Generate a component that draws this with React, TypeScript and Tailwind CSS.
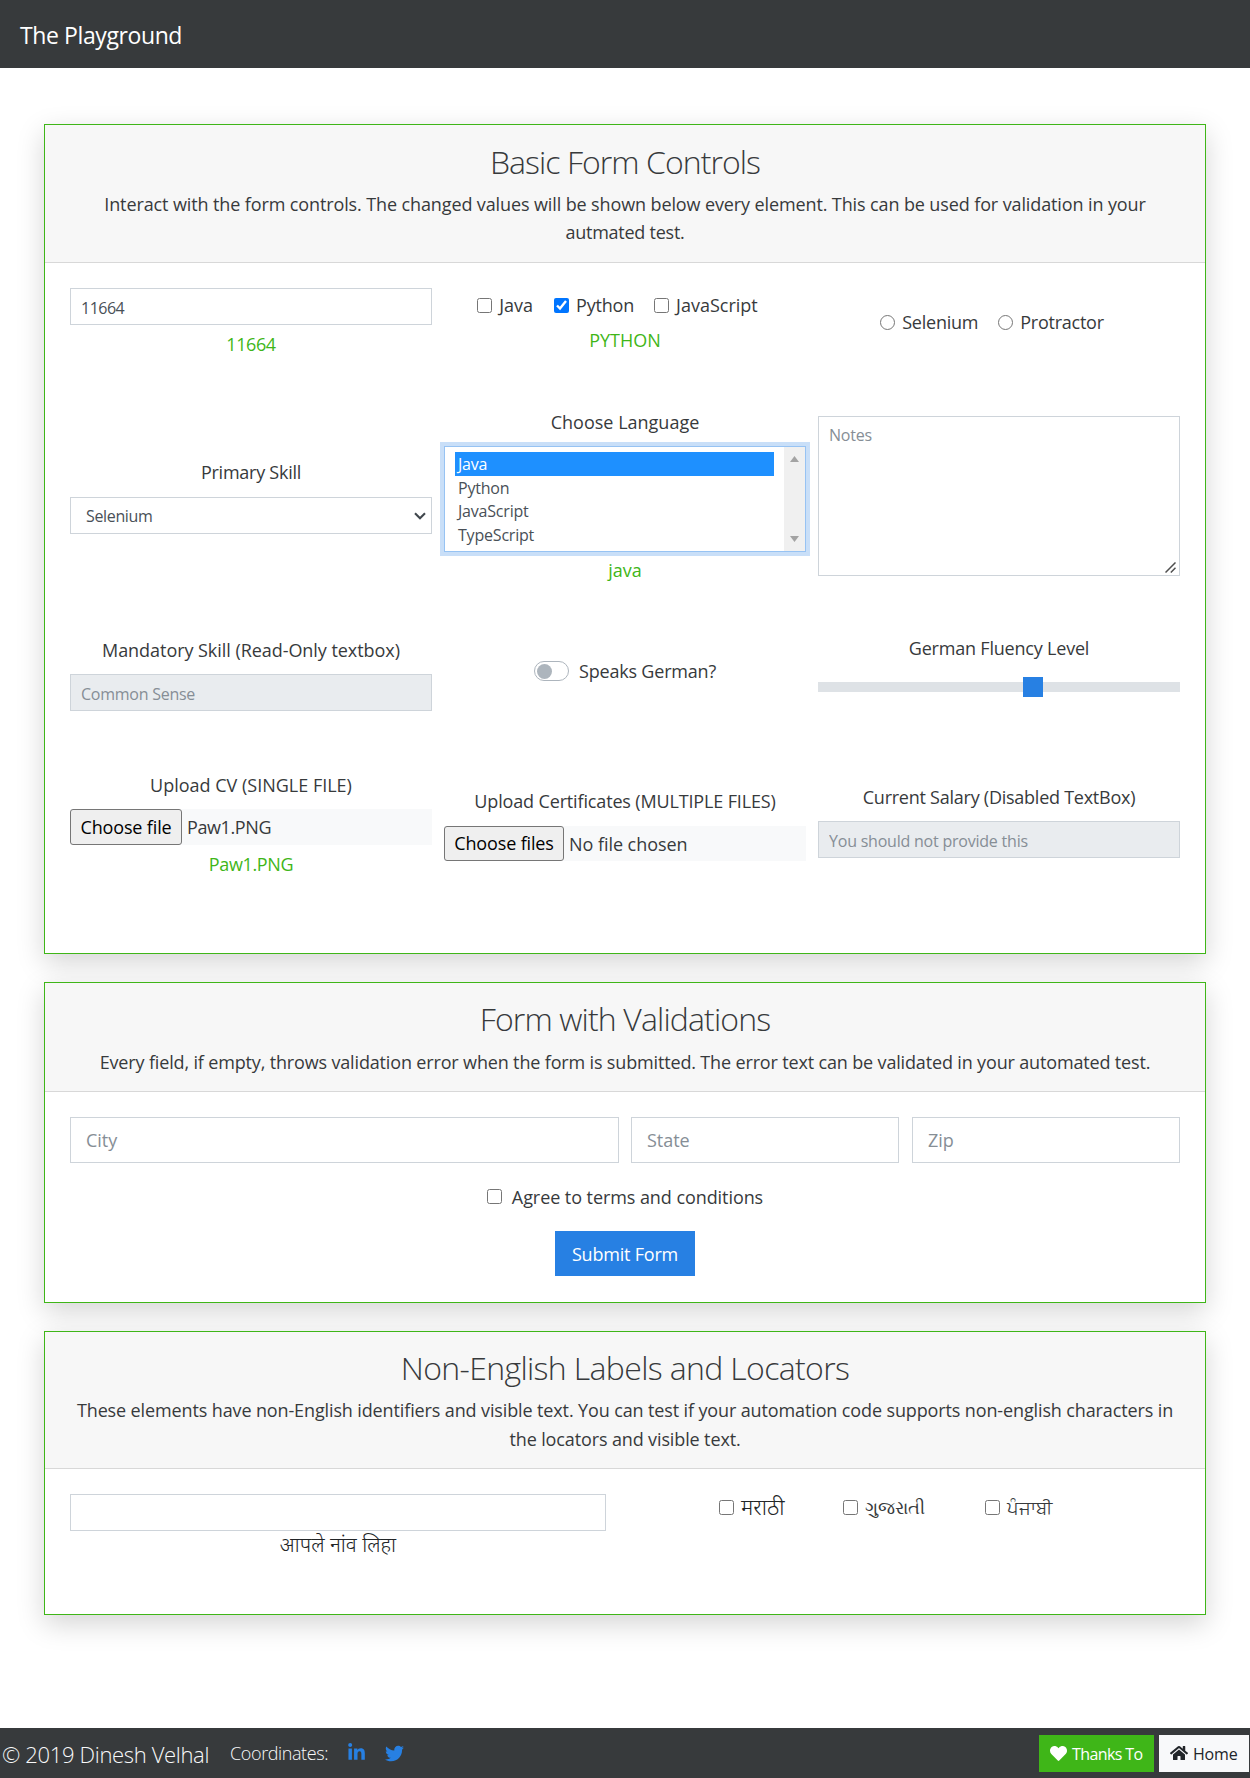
import type { ReactNode } from "react";
import { FaHeart, FaHome, FaLinkedinIn, FaTwitter } from "react-icons/fa";

function Card({ title, lead, headerClass, className, children }: {
  title: ReactNode;
  lead: ReactNode;
  headerClass: string;
  className: string;
  children: ReactNode;
}) {
  return (
    <section className={`flex flex-col border border-[#3fb618] bg-white shadow-[0_9px_26px_rgba(0,0,0,0.17)] ${className}`}>
      <header className={`border-b border-[#d8d8d8] bg-[#f7f7f7] text-center whitespace-nowrap ${headerClass}`}>
        <h2 className="mb-2 text-[32px] leading-10 font-light">{title}</h2>
        {lead}
      </header>
      {children}
    </section>
  );
}

function Label({ className = "", children }: { className?: string; children: ReactNode }) {
  return <div className={`text-center leading-7 whitespace-nowrap ${className}`}>{children}</div>;
}

function Check({ label, type = "checkbox", checked = false, className = "", textClass = "" }: {
  label: string;
  type?: "checkbox" | "radio";
  checked?: boolean;
  className?: string;
  textClass?: string;
}) {
  return (
    <label className={`flex items-center leading-7 whitespace-nowrap ${className}`}>
      <input type={type} defaultChecked={checked} className="mr-[7px] size-[15px] shrink-0 accent-[#0075ff]" />
      <span className={textClass}>{label}</span>
    </label>
  );
}

const field = "h-[37px] w-full rounded-none border border-[#ced4da] px-[10px] pt-[2px] text-[16px] text-[#495057] placeholder:text-[#868e96] placeholder:opacity-100";
const bigField = "h-[46px] w-full rounded-none border border-[#ced4da] px-[15px] text-[18px] tracking-[-0.05px] placeholder:text-[#868e96] placeholder:opacity-100";

export default function App() {
  return (
    <div className="flex h-[1778px] w-[1250px] flex-col overflow-hidden bg-white font-['Open_Sans','Noto_Sans',sans-serif] text-[18px] text-[#373a3c]">
      <nav className="flex h-[68px] shrink-0 items-center bg-[#373a3c] pt-[1px] pl-5">
        <span className="text-[23px] leading-8 tracking-[-0.4px] text-white">The Playground</span>
      </nav>

      <main className="flex flex-col px-11 pt-14">
        <Card
          className="h-[830px]"
          headerClass="h-[138px] pt-[17px]"
          title={<span className="tracking-[-0.95px]">Basic Form Controls</span>}
          lead={
            <p className="leading-7">
              <span className="tracking-[-0.115px]">Interact with the form controls. The changed values will be shown below every element. This can be used for validation in your</span>
              <br />
              <span className="tracking-[-0.25px]">autmated test.</span>
            </p>
          }
        >
          <div className="grid grid-cols-3 grid-rows-[119px_226px_137px_150px] gap-x-3 px-[25px] pt-[25px]">
            <div>
              <input className={`${field} block tracking-[-0.5px]`} defaultValue="11664" />
              <Label className="mt-[5px] tracking-[-0.4px] text-[#3fb618]">11664</Label>
            </div>
            <div className="pt-[3px]">
              <div className="flex justify-center pr-[15px]">
                <Check label="Java" className="mr-[21px]" />
                <Check label="Python" checked className="mr-5" textClass="tracking-[-0.2px]" />
                <Check label="JavaScript" />
              </div>
              <Label className="mt-[7px] text-[#3fb618]">PYTHON</Label>
            </div>
            <div className="flex items-start justify-center pt-5 pr-[14px]">
              <Check type="radio" label="Selenium" className="mr-5" textClass="tracking-[-0.24px]" />
              <Check type="radio" label="Protractor" textClass="tracking-[-0.25px]" />
            </div>

            <div className="pt-[51px]">
              <Label className="tracking-[-0.25px]">Primary Skill</Label>
              <div className="mt-[11px] flex h-[37px] items-center justify-between border border-[#ced4da] pr-[5px] pl-[15px] text-[16px] text-[#495057]">
                <span className="pt-[1px] tracking-[-0.35px]">Selenium</span>
                <svg width="12" height="8" viewBox="0 0 12 8" fill="none" stroke="#40474d" strokeWidth="2.1">
                  <path d="M1 1.2 6 6.2 11 1.2" />
                </svg>
              </div>
            </div>
            <div>
              <Label className="pt-[1px]">Choose Language</Label>
              <div className="mt-[10px] flex h-[106px] border border-[#97c3f3] pl-[10px] text-[16px] leading-[24.5px] tracking-[-0.2px] text-[#495057] shadow-[0_0_0_4px_#c9dff8]">
                <ul className="mr-[10px] grow pt-[5px]">
                  <li className="h-[23.5px] bg-[#1e90ff] pl-[3px] text-white">Java</li>
                  <li className="h-[23.5px] pl-[3px]">Python</li>
                  <li className="h-[23.5px] pl-[3px]">JavaScript</li>
                  <li className="h-[23.5px] pl-[3px]">TypeScript</li>
                </ul>
                <div className="flex w-[21px] flex-col items-center justify-between bg-[#f0f0f0] py-[9px]">
                  <svg width="9" height="6" viewBox="0 0 9 6" fill="#a3a3a3"><path d="M0 6 4.5 0 9 6Z" /></svg>
                  <svg width="9" height="6" viewBox="0 0 9 6" fill="#a3a3a3"><path d="M0 0 4.5 6 9 0Z" /></svg>
                </div>
              </div>
              <Label className="mt-[4px] text-[#3fb618]">java</Label>
            </div>
            <div className="pt-[9px]">
              <div className="relative h-[160px] border border-[#ced4da] px-[10px] pt-[6px] text-[16px] leading-6 tracking-[-0.2px] text-[#868e96]">
                Notes
                <svg width="11" height="11" viewBox="0 0 11 11" stroke="#4f4f4f" strokeWidth="1.5" className="absolute right-[3px] bottom-[2px]">
                  <path d="M0.5 10.5 10.5 0.5M5.8 10.5 10.5 5.8" />
                </svg>
              </div>
            </div>

            <div className="pt-[3px]">
              <Label className="tracking-[-0.05px]">Mandatory Skill (Read-Only textbox)</Label>
              <input className={`${field} mt-[10px] block bg-[#e9ecef] tracking-[-0.25px]`} placeholder="Common Sense" readOnly />
            </div>
            <div className="flex items-start justify-center pt-6">
              <span className="mt-[4px] mr-[10px] flex h-5 w-[35px] items-center rounded-full border border-[#adb5bd] pl-[2px]">
                <span className="size-[15px] rounded-full bg-[#adb5bd]" />
              </span>
              <span className="leading-7 tracking-[-0.2px]">Speaks German?</span>
            </div>
            <div className="pt-[1px]">
              <Label className="tracking-[-0.2px]">German Fluency Level</Label>
              <div className="mt-[15px] flex h-5 items-center">
                <div className="h-[10px] w-[205px] bg-[#dee2e6]" />
                <div className="size-5 bg-[#2780e3]" />
                <div className="h-[10px] grow bg-[#dee2e6]" />
              </div>
            </div>

            <div className="pt-[1px]">
              <Label>Upload CV (SINGLE FILE)</Label>
              <div className="mt-[10px] flex h-9 items-center bg-[#f8f9fa]">
                <button className="h-9 w-[112px] rounded-[3px] border border-[#767676] bg-[#efefef] tracking-[-0.15px] whitespace-nowrap text-black">Choose file</button>
                <span className="ml-[5px] tracking-[-0.4px]">Paw1.PNG</span>
              </div>
              <Label className="mt-[5px] tracking-[-0.35px] text-[#3fb618]">Paw1.PNG</Label>
            </div>
            <div className="pt-[17px]">
              <Label className="tracking-[-0.15px]">Upload Certificates (MULTIPLE FILES)</Label>
              <div className="mt-[11px] flex h-[35px] items-center bg-[#f8f9fa]">
                <button className="h-[35px] w-[120px] rounded-[3px] border border-[#767676] bg-[#efefef] tracking-[-0.15px] whitespace-nowrap text-black">Choose files</button>
                <span className="ml-[5px] pt-[1px] tracking-[-0.05px]">No file chosen</span>
              </div>
            </div>
            <div className="pt-[13px]">
              <Label className="tracking-[-0.25px]">Current Salary (Disabled TextBox)</Label>
              <input className={`${field} mt-[10px] block bg-[#e9ecef] tracking-[-0.22px]`} placeholder="You should not provide this" disabled />
            </div>
          </div>
        </Card>

        <Card
          className="mt-7 h-[321px]"
          headerClass="h-[109px] pt-4"
          title={<span className="tracking-[-0.85px]">Form with Validations</span>}
          lead={<p className="pt-[1px] leading-7 tracking-[-0.155px]">Every field, if empty, throws validation error when the form is submitted. The error text can be validated in your automated test.</p>}
        >
          <div className="flex flex-col items-center px-[25px] pt-[25px]">
            <div className="grid w-full grid-cols-[549px_268px_268px] gap-x-3">
              <input className={bigField} placeholder="City" />
              <input className={bigField} placeholder="State" />
              <input className={`${bigField} ml-[1px]`} placeholder="Zip" />
            </div>
            <label className="mt-5 flex items-center leading-7 tracking-[-0.07px]">
              <input type="checkbox" className="mr-[10px] mb-[1px] size-[15px]" />
              Agree to terms and conditions
            </label>
            <button className="mt-5 h-[45px] w-[140px] bg-[#2780e3] pt-[1px] tracking-[-0.2px] text-white">Submit Form</button>
          </div>
        </Card>

        <Card
          className="mt-7 h-[284px]"
          headerClass="h-[137px] pt-4"
          title={<span className="tracking-[-0.65px]">Non-English Labels and Locators</span>}
          lead={
            <p className="leading-[28.5px] tracking-[-0.125px]">
              These elements have non-English identifiers and visible text. You can test if your automation code supports non-english characters in
              <br />
              the locators and visible text.
            </p>
          }
        >
          <div className="grid grid-cols-[536px_1fr] px-[25px] pt-[25px] font-['Noto_Sans',sans-serif] font-light">
            <div>
              <input className={`${field} block`} />
              <Label className="-mt-[1px] text-[20.8px] text-[#222527]">आपले नांव लिहा</Label>
            </div>
            <div className="-mt-[1px] flex items-start pl-[113px]">
              <Check label="मराठी" className="w-[124px]" textClass="text-[21.7px] text-[#222527]" />
              <Check label="ગુજરાતી" className="w-[142px]" textClass="text-[18.4px]" />
              <Check label="ਪੰਜਾਬੀ" textClass="text-[18.4px]" />
            </div>
          </div>
        </Card>
      </main>

      <footer className="mt-auto flex h-[50px] shrink-0 items-center bg-[#373a3c] pl-[2px] font-light text-[#f8f9fa]">
        <span className="mt-[1px] text-[22px] leading-8 tracking-[-0.34px]">© 2019 Dinesh Velhal</span>
        <span className="mt-[1px] ml-[21px] tracking-[-0.4px]">Coordinates:</span>
        <FaLinkedinIn className="mb-[1px] ml-[19px] size-[19px] text-[#2780e3]" />
        <FaTwitter className="ml-[19px] size-[19px] text-[#2780e3]" />
        <div className="ml-auto flex gap-[5px] pr-[1px] text-[16px] font-normal">
          <a className="flex h-[37px] w-[115px] items-center bg-[#3fb618] pl-[11px] whitespace-nowrap text-white">
            <FaHeart className="mr-[5px] size-[17px]" />
            <span className="pt-[2px] tracking-[-0.6px]">Thanks To</span>
          </a>
          <a className="flex h-[37px] w-[90px] items-center bg-[#f8f9fa] pl-[11px] text-[#212529]">
            <FaHome className="mr-[5px] size-[18px]" />
            <span className="pt-[2px] tracking-[-0.2px]">Home</span>
          </a>
        </div>
      </footer>
    </div>
  );
}
